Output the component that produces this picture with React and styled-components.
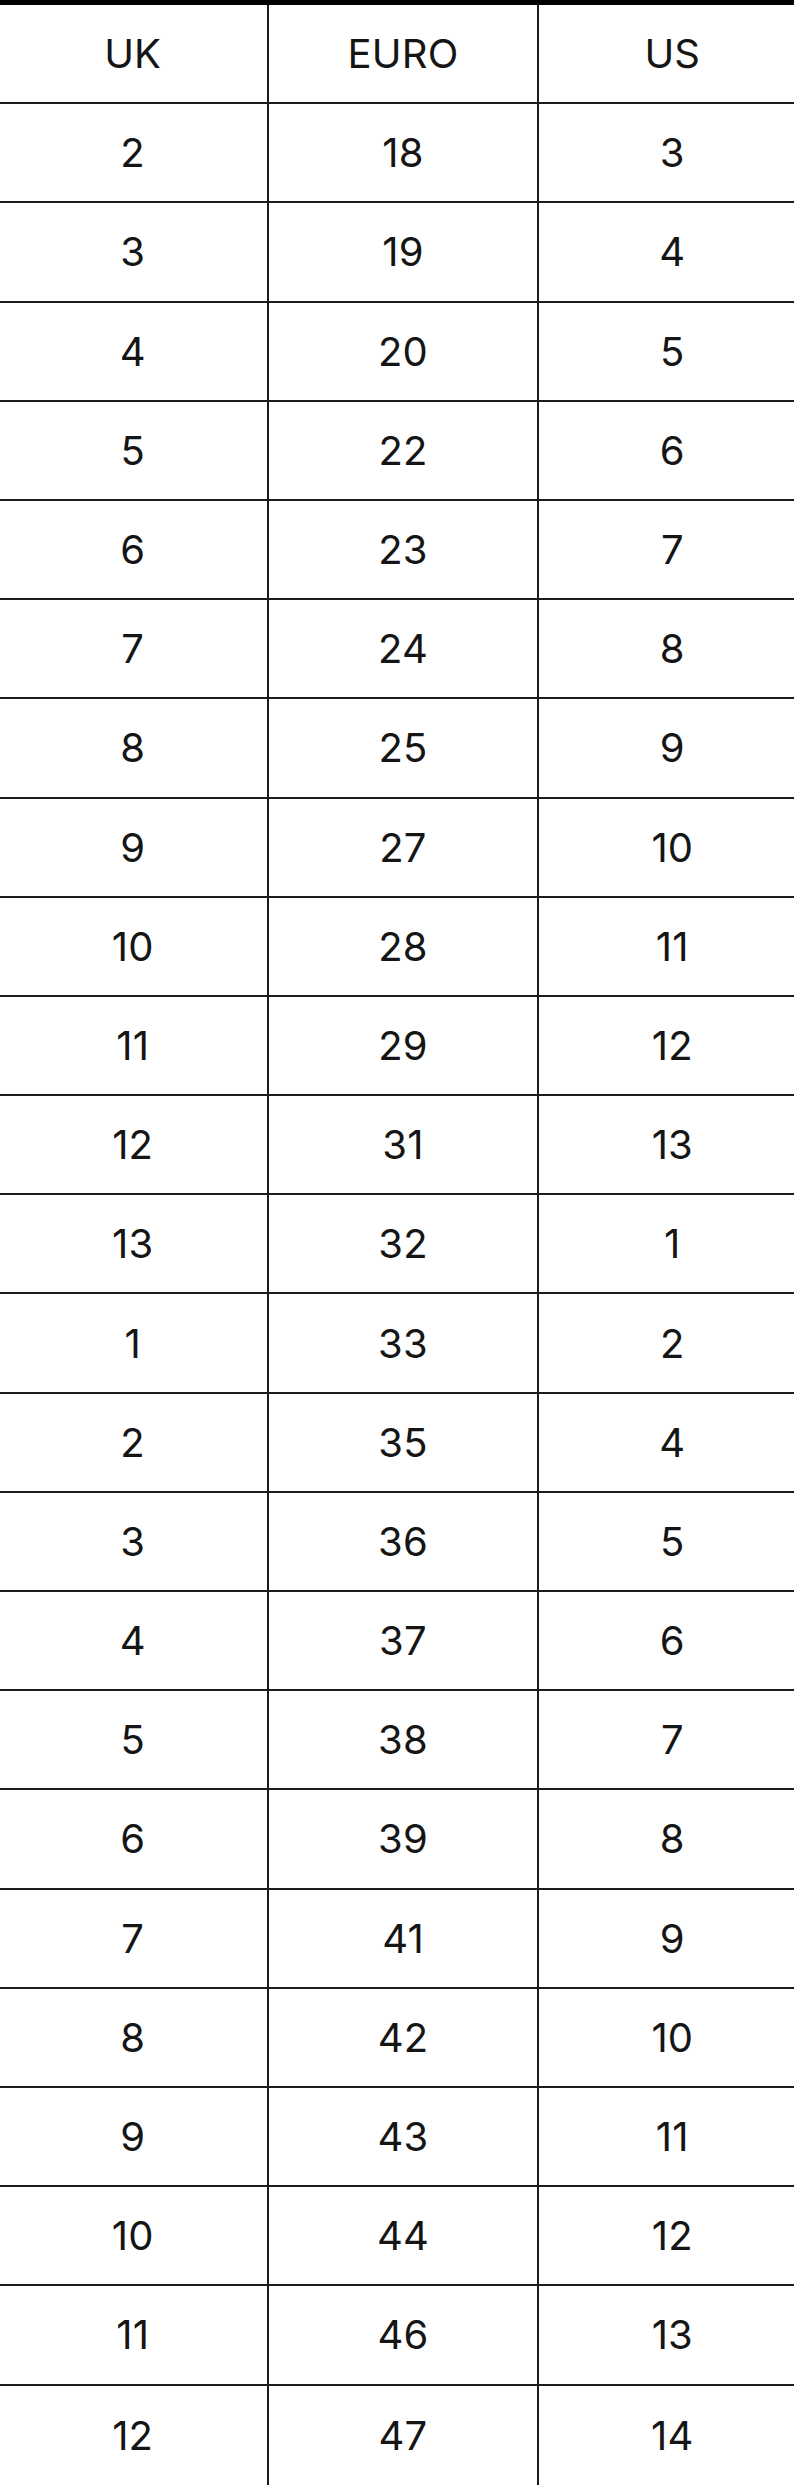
import React from "react";
import styled, { createGlobalStyle } from "styled-components";

const GlobalStyle = createGlobalStyle`
  html, body {
    margin: 0;
    padding: 0;
    background: #ffffff;
    overflow: hidden;
  }
  body {
    font-family: Inter, "Noto Sans", "Liberation Sans", sans-serif;
    color: #111111;
  }
`;

const Page = styled.div`
  width: 794px;
  height: 2485px;
  overflow: hidden;
`;

const Table = styled.div`
  margin-left: -2px;
  width: 808px;
  border-top: 5px solid #000000;
`;

const Row = styled.div`
  display: grid;
  grid-template-columns: repeat(3, 1fr);
  height: 99.2px;
  box-sizing: border-box;
  border-bottom: ${({ $last }) => ($last ? "none" : "2px solid #1c1c1c")};
`;

const Cell = styled.div`
  display: flex;
  align-items: center;
  justify-content: center;
  font-size: 40px;
  font-weight: 400;
  letter-spacing: 0.2px;
  color: #151515;
  border-left: ${({ $first }) => ($first ? "none" : "2px solid #1c1c1c")};
`;

const header = ["UK", "EURO", "US"];

const sizes = [
  [2, 18, 3],
  [3, 19, 4],
  [4, 20, 5],
  [5, 22, 6],
  [6, 23, 7],
  [7, 24, 8],
  [8, 25, 9],
  [9, 27, 10],
  [10, 28, 11],
  [11, 29, 12],
  [12, 31, 13],
  [13, 32, 1],
  [1, 33, 2],
  [2, 35, 4],
  [3, 36, 5],
  [4, 37, 6],
  [5, 38, 7],
  [6, 39, 8],
  [7, 41, 9],
  [8, 42, 10],
  [9, 43, 11],
  [10, 44, 12],
  [11, 46, 13],
  [12, 47, 14],
];

const App = () => {
  const rows = [header, ...sizes];
  return (
    <Page>
      <GlobalStyle />
      <Table>
        {rows.map((row, i) => (
          <Row key={i} $last={i === rows.length - 1}>
            {row.map((value, j) => (
              <Cell key={j} $first={j === 0}>
                {value}
              </Cell>
            ))}
          </Row>
        ))}
      </Table>
    </Page>
  );
};

export default App;
